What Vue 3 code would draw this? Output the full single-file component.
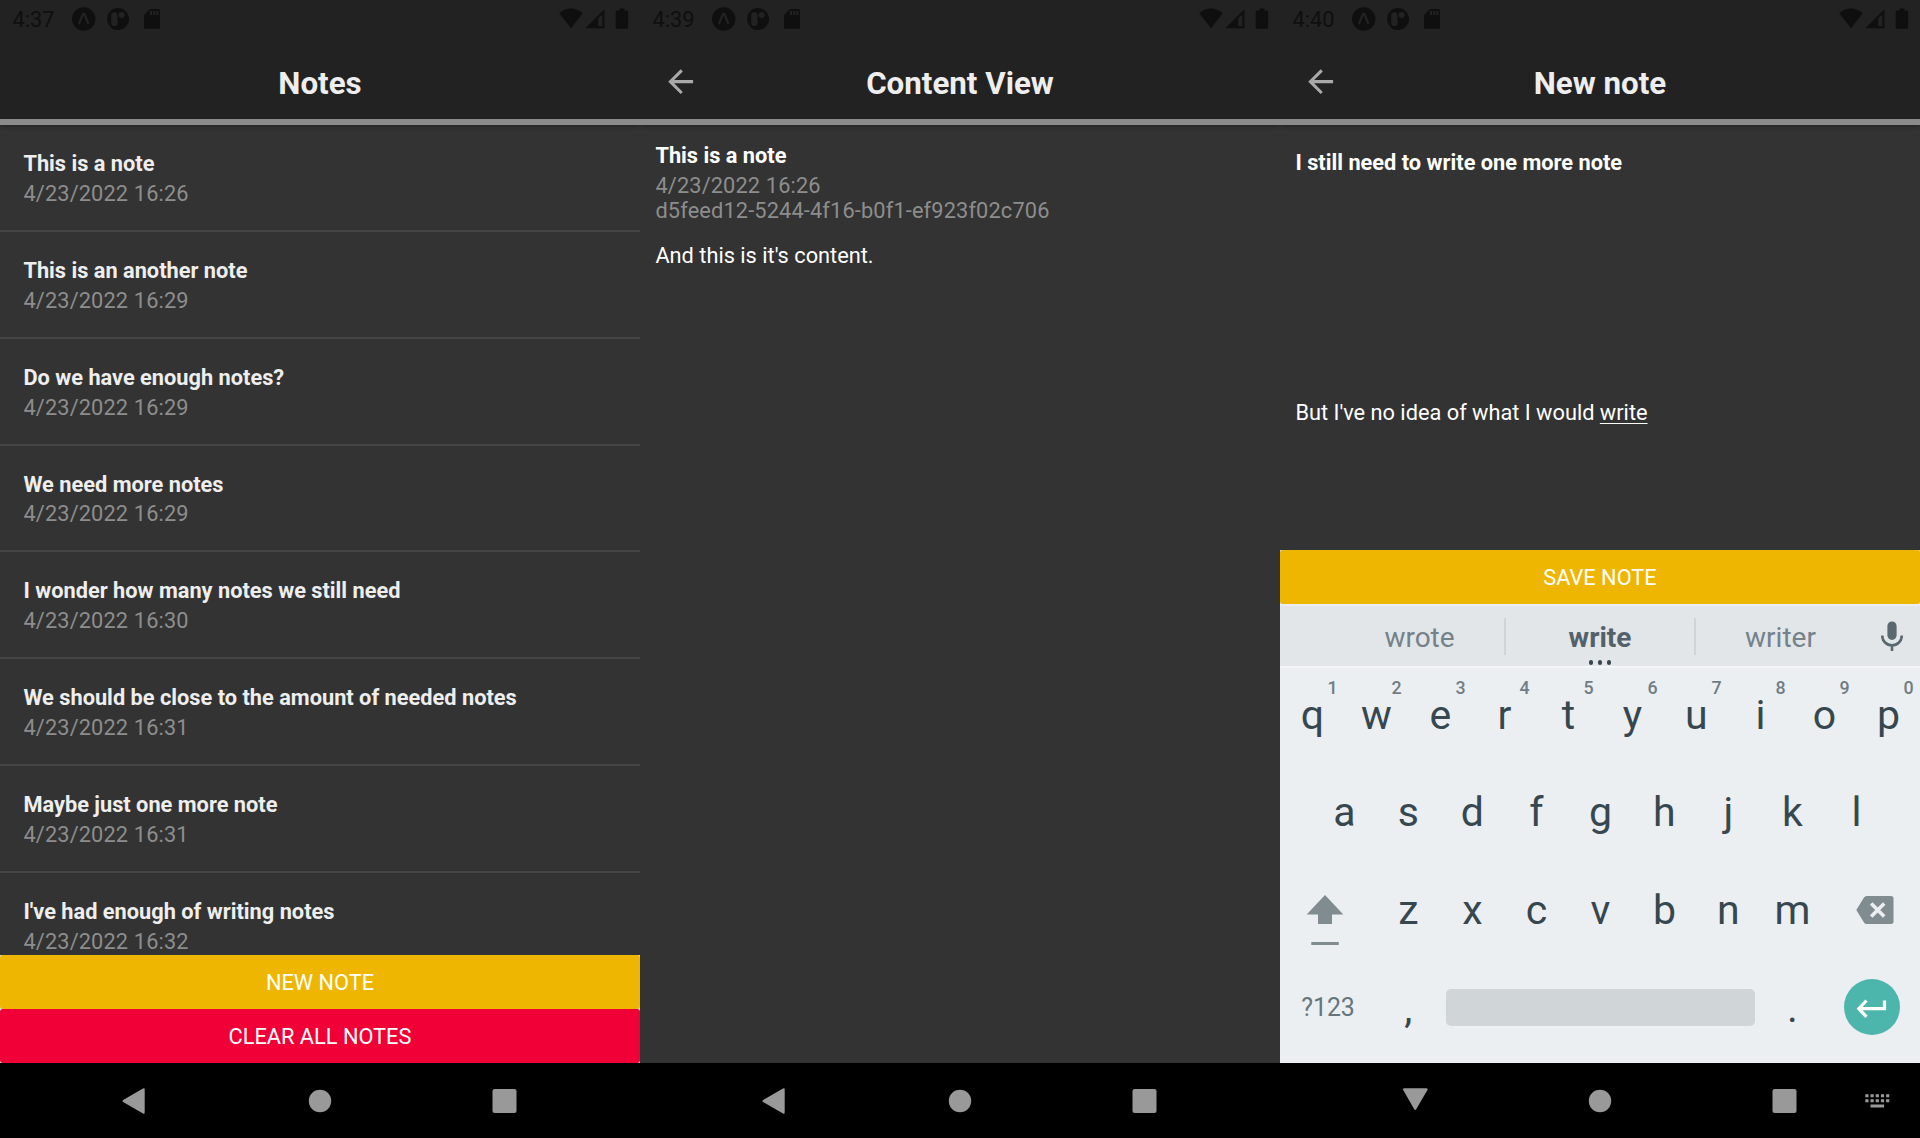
<script setup>
const notes = [
  { title: 'This is a note', date: '4/23/2022 16:26' },
  { title: 'This is an another note', date: '4/23/2022 16:29' },
  { title: 'Do we have enough notes?', date: '4/23/2022 16:29' },
  { title: 'We need more notes', date: '4/23/2022 16:29' },
  { title: 'I wonder how many notes we still need', date: '4/23/2022 16:30' },
  { title: 'We should be close to the amount of needed notes', date: '4/23/2022 16:31' },
  { title: 'Maybe just one more note', date: '4/23/2022 16:31' },
  { title: "I've had enough of writing notes", date: '4/23/2022 16:32' },
]
const screens = [
  { id: 'list', time: '4:37', title: 'Notes', back: false },
  { id: 'view', time: '4:39', title: 'Content View', back: true },
  { id: 'edit', time: '4:40', title: 'New note', back: true },
]
const topKeys = [...'qwertyuiop'].map((k, i) => ({ k, hint: (i + 1) % 10 }))
const midKeys = [...'asdfghjkl']
const lowKeys = [...'zxcvbnm']
</script>

<template>
  <main class="stage">
    <section v-for="s in screens" :key="s.id" class="phone">
      <header class="top">
        <div class="status">
          <span class="time">{{ s.time }}</span>
          <svg class="status-left" width="96" height="38" viewBox="70 0 96 38">
            <circle cx="83.7" cy="19" r="11.7" />
            <path class="cut-line" d="M78.9 24 82.6 14.8Q83.7 13 84.8 14.8L88.5 24" />
            <circle cx="118" cy="19" r="11" />
            <rect class="cut" x="111.3" y="12.3" width="6.2" height="13.6" rx="2.6" />
            <circle class="cut" cx="121.6" cy="15" r="3" />
            <path d="M150 9h8.5q1.5 0 1.5 1.5v16.8q0 1.5-1.5 1.5h-13q-1.5 0-1.5-1.5V15z" />
            <path class="cut" d="M150 11h2v4h-2zM153.2 11h2v4h-2zM156.4 11h2v4h-2z" />
          </svg>
          <svg class="status-right" width="80" height="38" viewBox="555 0 80 38">
            <path d="M571 28.2 559.3 13.2Q564.5 8.6 571 8.6T582.7 13.2z" />
            <path d="M604.5 9.3V28.2H585.3z" />
            <path class="cut" d="M598.2 18.2l4.2-4V26.3h-4.2z" />
            <path d="M619.3 8.6h5v2h2.6q1.2 0 1.2 1.2v15.8q0 1.2-1.2 1.2h-10q-1.2 0-1.2-1.2V11.8q0-1.2 1.2-1.2h2.4z" />
          </svg>
        </div>
        <div class="bar">
          <svg v-if="s.back" class="back" width="37.3" height="37.3" viewBox="0 0 24 24">
            <path d="M20 11H7.83l5.59-5.59L12 4l-8 8 8 8 1.41-1.41L7.83 13H20v-2z" />
          </svg>
          <h1>{{ s.title }}</h1>
        </div>
      </header>

      <div v-if="s.id === 'list'" class="body">
        <ul class="list">
          <li v-for="n in notes" :key="n.title">
            <strong>{{ n.title }}</strong>
            <span class="meta">{{ n.date }}</span>
          </li>
        </ul>
        <div class="actions">
          <button class="action amber">NEW NOTE</button>
          <button class="action red">CLEAR ALL NOTES</button>
        </div>
      </div>

      <div v-else-if="s.id === 'view'" class="body detail">
        <strong>This is a note</strong>
        <span class="meta">4/23/2022 16:26</span>
        <span class="meta">d5feed12-5244-4f16-b0f1-ef923f02c706</span>
        <p>And this is it's content.</p>
      </div>

      <div v-else class="body">
        <div class="form">
          <strong>I still need to write one more note</strong>
          <p>But I've no idea of what I would <u>write</u></p>
        </div>
        <div class="actions">
          <button class="action amber">SAVE NOTE</button>
        </div>
        <div class="suggest">
          <span class="side">wrote</span>
          <span class="mid">write<i class="dots"><b></b><b></b><b></b></i></span>
          <span class="side">writer</span>
          <svg class="mic" width="22" height="30" viewBox="0 0 22 30">
            <rect x="6.4" y="0.5" width="9.2" height="18.4" rx="4.6" />
            <path d="M1.2 14.6a9.8 9.8 0 0 0 19.6 0M11 24v6" />
          </svg>
        </div>
        <div class="keyboard">
          <div class="keys first">
            <span v-for="t in topKeys" :key="t.k" class="key">{{ t.k }}<sup>{{ t.hint }}</sup></span>
          </div>
          <div class="keys">
            <span v-for="k in midKeys" :key="k" class="key">{{ k }}</span>
          </div>
          <div class="keys">
            <span class="wide shift">
              <svg width="38" height="52" viewBox="0 0 38 52">
                <path d="M19 1 37.3 20.5H26V30H12V20.5H.7zM5.300 48h27.5v3H5.300z" />
              </svg>
            </span>
            <span v-for="k in lowKeys" :key="k" class="key">{{ k }}</span>
            <span class="wide del">
              <svg width="38" height="28" viewBox="0 0 38 28">
                <path d="M10.5 0H35q2.5 0 2.5 2.5v23q0 2.5-2.5 2.5H10.5Q9 28 8 26.5L.3 14 8 1.5Q9 0 10.5 0z" />
                <path class="x" d="M15.2 7.4 28.2 20.6M28.2 7.4 15.2 20.6" />
              </svg>
            </span>
          </div>
          <div class="keys last">
            <span class="wide sym">?123</span>
            <span class="key">,</span>
            <span class="space"></span>
            <span class="key">.</span>
            <span class="wide">
              <svg width="56" height="56" viewBox="0 0 56 56">
                <circle cx="28" cy="28" r="28" />
                <path class="enter" d="M40.5 21.5V29.7H15M22.5 21.5 14.8 29.7 22.5 37.9" />
              </svg>
            </span>
          </div>
        </div>
      </div>

      <nav class="nav">
        <svg width="185" height="40" viewBox="0.5 0 185 40">
          <path v-if="s.id !== 'edit'" d="M100.5 7.6q1.700-1 1.700.8v23.200q0 1.800-1.700.8L80.600 21q-1.500-1 0-2z" />
          <path v-else d="M81.7 7.2q-2 0-1 1.7l11 19.4q1 1.5 2 0l11.200-19.4q1-1.7-1-1.7z" />
        </svg>
        <svg width="185" height="40" viewBox="0.5 0 185 40"><circle cx="92.5" cy="20" r="11.2" /></svg>
        <svg width="185" height="40" viewBox="0.5 0 185 40"><rect x="80" y="8" width="24" height="24" rx="2.2" /></svg>
        <svg v-if="s.id === 'edit'" class="ime" width="25" height="14" viewBox="0 0 25 14">
          <path d="M.3.2h3.2v3H.3zM5.5.2h3.2v3H5.5zM10.7.2h3.2v3h-3.2zM15.9.2h3.2v3h-3.2zM21.1.2h3.2v3h-3.2zM.3 5.2h3.2v3H.3zM5.5 5.2h3.2v3H5.5zM10.7 5.2h3.2v3h-3.2zM15.9 5.2h3.2v3h-3.2zM21.1 5.2h3.2v3h-3.2zM5.5 10.5h13.6v3H5.5z" />
        </svg>
      </nav>
    </section>
  </main>
</template>

<style>
body {
  background: #333;
}
</style>

<style scoped>
.stage {
  display: flex;
  width: 1920px;
  height: 1138px;
  overflow: hidden;
  font: 21.78px/26px Roboto, sans-serif;
  color: #fff;
}
.phone {
  display: flex;
  flex-direction: column;
  width: 640px;
  height: 1138px;
  background: #333;
}
.top {
  position: relative;
  height: 119px;
  border-bottom: 6px solid #8b8b8b;
  background: #222;
  box-shadow: 0 1px 5px rgba(0, 0, 0, 0.35);
  clip-path: inset(0 0 -12px 0);
}
.status {
  display: flex;
  height: 38px;
  color: #0f0f0f;
  fill: #0f0f0f;
}
.time {
  width: 57px;
  padding-left: 12.6px;
  line-height: 39px;
}
.cut {
  fill: #222;
}
.cut-line {
  fill: none;
  stroke: #222;
  stroke-width: 2.2;
}
.status-left {
  margin-left: 0.4px;
}
.status-right {
  margin: 0 5px 0 auto;
}
.bar {
  position: relative;
  height: 81px;
}
.back {
  position: absolute;
  left: 22.4px;
  top: 24.6px;
  fill: #a9a9a9;
}
h1 {
  margin: 0;
  padding-top: 26px;
  text-align: center;
  font-size: 31.3px;
  line-height: 39px;
  font-weight: 700;
  color: #eee;
}
.body {
  display: flex;
  flex-direction: column;
  height: 938px;
}
strong {
  display: block;
  font-weight: 700;
}
.meta {
  display: block;
  letter-spacing: 0.14px;
  color: #8d8d8d;
}
p {
  margin: 0;
}
.list {
  height: 830px;
  margin: 0;
  padding: 0;
  overflow: hidden;
  list-style: none;
}
.list li {
  box-sizing: border-box;
  height: 106.85px;
  padding: 26.1px 23.4px 0;
  border-bottom: 2px solid #454545;
}
.list strong {
  margin-bottom: 3.8px;
  color: #eee;
}
.actions {
  display: flex;
  flex-direction: column;
  background: #ddd;
}
.action {
  height: 54px;
  padding: 2px 0 0;
  border: 0;
  border-radius: 3px;
  font: 21.78px/52px Roboto, sans-serif;
  color: #fff;
}
.amber {
  background: #eeb600;
}
.red {
  background: #f00037;
}
.detail {
  height: 920px;
  padding: 18px 15.4px 0;
}
.detail .meta:nth-child(2) {
  margin-top: 4px;
}
.detail .meta + .meta {
  margin-top: -1px;
}
.detail p {
  margin-top: 19px;
}
.form {
  height: 400px;
  padding: 25px 15.4px 0;
}
.form p {
  margin-top: 224px;
}
u {
  text-decoration-thickness: 1px;
  text-underline-offset: 3px;
}
.suggest {
  display: flex;
  height: 60px;
  padding: 0 0 0 55px;
  border-top: 2px solid #eceff1;
  background: #e2e6e9;
  color: #75828a;
  font-size: 28px;
  line-height: 64px;
  text-align: center;
}
.side {
  width: 169px;
}
.mid {
  position: relative;
  width: 192px;
  color: #53626a;
  font-weight: 700;
}
.mid::before,
.mid::after {
  content: '';
  position: absolute;
  top: 12px;
  left: 0;
  width: 2px;
  height: 37px;
  background: #d0d5d8;
}
.mid::after {
  left: auto;
  right: 0;
}
.dots {
  position: absolute;
  left: 0;
  right: 0;
  top: 54px;
  display: flex;
  justify-content: center;
  gap: 4.5px;
}
.dots b {
  width: 4.5px;
  height: 4.5px;
  border-radius: 50%;
  background: #37474f;
}
.mic {
  margin: 14.5px 0 0 15.5px;
  fill: #5a6970;
}
.mic path {
  fill: none;
  stroke: #5a6970;
  stroke-width: 2.6;
}
.keyboard {
  height: 397px;
  background: #ebeff2;
  box-shadow: inset 0 2px #f4f6f8;
  color: #37474f;
}
.keys {
  display: flex;
  justify-content: center;
  height: 98px;
  font-size: 41px;
  line-height: 98px;
}
.first {
  height: 97px;
  line-height: 99px;
}
.key {
  position: relative;
  left: 0.4px;
  width: 64px;
  text-align: center;
}
sup {
  position: absolute;
  top: 11px;
  right: 6.9px;
  font-size: 17.8px;
  line-height: 21px;
  font-weight: 500;
  color: #6f7d84;
}
.wide {
  width: 96px;
  display: flex;
  justify-content: center;
  align-items: center;
}
.shift {
  align-items: flex-start;
}
.shift svg {
  margin: 33px 6px 0 0;
  fill: #818c90;
}
.del svg {
  margin: 0 0 1px 6px;
  fill: #818c90;
}
.x {
  stroke: #ebeff2;
  stroke-width: 3.6;
}
.last {
  height: 96px;
  line-height: 98px;
}
.sym {
  padding-top: 2px;
  height: 96px;
  box-sizing: border-box;
  font-size: 24.9px;
  color: #66757c;
}
.space {
  width: 309px;
  height: 37px;
  margin: 30px 5px 0 6px;
  border-radius: 5px;
  background: #d0d5d8;
}
.last circle {
  fill: #4db6ac;
}
.enter {
  fill: none;
  stroke: #fff;
  stroke-width: 3.2;
}
.nav {
  position: relative;
  display: flex;
  justify-content: center;
  align-items: center;
  height: 75px;
  background: #000;
  fill: #999;
}
.ime {
  position: absolute;
  left: 585px;
  top: 31px;
}
</style>
